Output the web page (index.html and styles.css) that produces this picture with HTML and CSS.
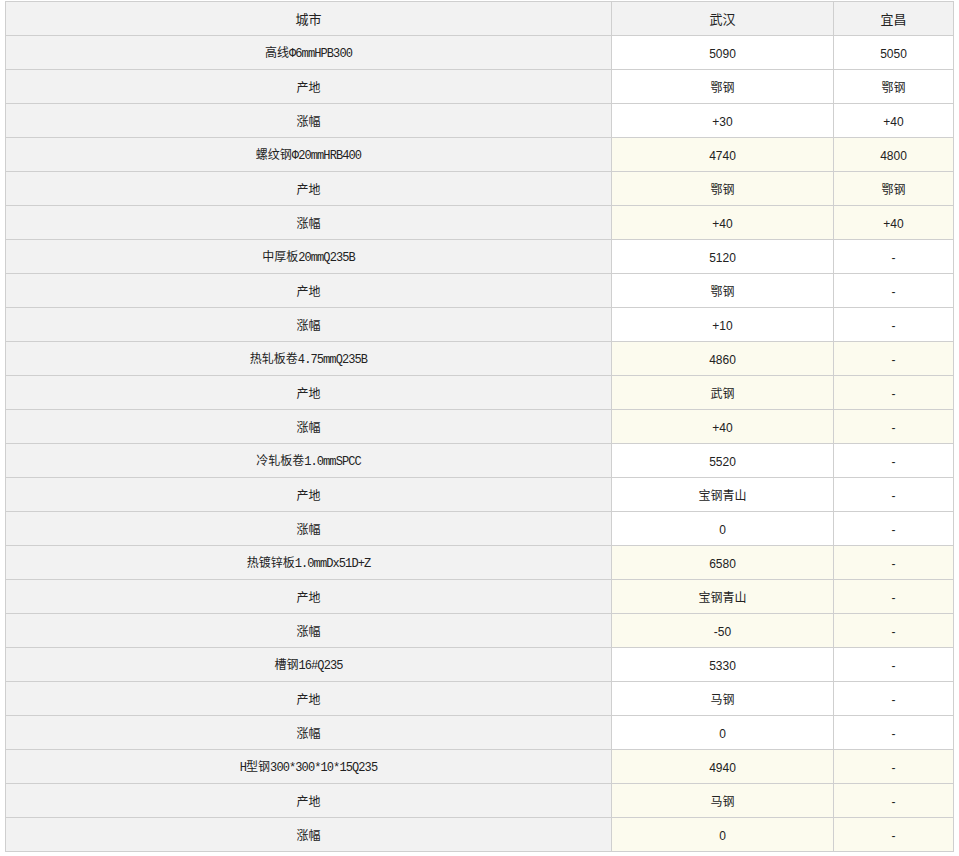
FILE: index.html
```html
<!DOCTYPE html>
<html lang="zh">
<head>
<meta charset="utf-8">
<link rel="stylesheet" href="styles.css">
</head>
<body>
<table class="price">
  <colgroup><col class="c1"><col class="c2"><col class="c3"></colgroup>
  <thead>
    <tr><th>城市</th><th>武汉</th><th>宜昌</th></tr>
  </thead>
  <tbody>
    <tr><td class="name">高线<span class="m">Φ6mmHPB300</span></td><td>5090</td><td>5050</td></tr>
    <tr><td class="name">产地</td><td>鄂钢</td><td>鄂钢</td></tr>
    <tr><td class="name">涨幅</td><td>+30</td><td>+40</td></tr>
    <tr class="alt"><td class="name">螺纹钢<span class="m">Φ20mmHRB400</span></td><td>4740</td><td>4800</td></tr>
    <tr class="alt"><td class="name">产地</td><td>鄂钢</td><td>鄂钢</td></tr>
    <tr class="alt"><td class="name">涨幅</td><td>+40</td><td>+40</td></tr>
    <tr><td class="name">中厚板<span class="m">20mmQ235B</span></td><td>5120</td><td>-</td></tr>
    <tr><td class="name">产地</td><td>鄂钢</td><td>-</td></tr>
    <tr><td class="name">涨幅</td><td>+10</td><td>-</td></tr>
    <tr class="alt"><td class="name">热轧板卷<span class="m">4.75mmQ235B</span></td><td>4860</td><td>-</td></tr>
    <tr class="alt"><td class="name">产地</td><td>武钢</td><td>-</td></tr>
    <tr class="alt"><td class="name">涨幅</td><td>+40</td><td>-</td></tr>
    <tr><td class="name">冷轧板卷<span class="m">1.0mmSPCC</span></td><td>5520</td><td>-</td></tr>
    <tr><td class="name">产地</td><td>宝钢青山</td><td>-</td></tr>
    <tr><td class="name">涨幅</td><td>0</td><td>-</td></tr>
    <tr class="alt"><td class="name">热镀锌板<span class="m">1.0mmDx51D+Z</span></td><td>6580</td><td>-</td></tr>
    <tr class="alt"><td class="name">产地</td><td>宝钢青山</td><td>-</td></tr>
    <tr class="alt"><td class="name">涨幅</td><td>-50</td><td>-</td></tr>
    <tr><td class="name">槽钢<span class="m">16#Q235</span></td><td>5330</td><td>-</td></tr>
    <tr><td class="name">产地</td><td>马钢</td><td>-</td></tr>
    <tr><td class="name">涨幅</td><td>0</td><td>-</td></tr>
    <tr class="alt"><td class="name"><span class="m">H</span>型钢<span class="m">300*300*10*15Q235</span></td><td>4940</td><td>-</td></tr>
    <tr class="alt"><td class="name">产地</td><td>马钢</td><td>-</td></tr>
    <tr class="alt"><td class="name">涨幅</td><td>0</td><td>-</td></tr>
  </tbody>
</table>
</body>
</html>
```
FILE: styles.css
```css
html, body {
  margin: 0;
  padding: 0;
  background: #ffffff;
}
body {
  padding: 1px 0 0 5px;
  font-family: "Liberation Sans", "Noto Sans CJK SC", sans-serif;
  font-size: 12px;
  color: #222222;
}
.price {
  border-collapse: collapse;
  table-layout: fixed;
  width: 948px;
}
.c1 { width: 606px; }
.c2 { width: 222px; }
.c3 { width: 120px; }
.price th,
.price td {
  border: 1px solid #cfcfcf;
  box-sizing: border-box;
  height: 34px;
  padding: 2px 0 0;
  text-align: center;
  vertical-align: middle;
  font-weight: normal;
  background: #ffffff;
  line-height: 16px;
}
.price th {
  background: #f2f2f2;
  font-size: 13px;
}
.price td.name {
  background: #f2f2f2;
}
.price tr.alt td {
  background: #fcfbee;
}
.price tr.alt td.name {
  background: #f2f2f2;
}
.m {
  font-family: "Liberation Mono", "DejaVu Sans Mono", monospace;
  font-size: 12px;
  letter-spacing: -0.9px;
}
```
